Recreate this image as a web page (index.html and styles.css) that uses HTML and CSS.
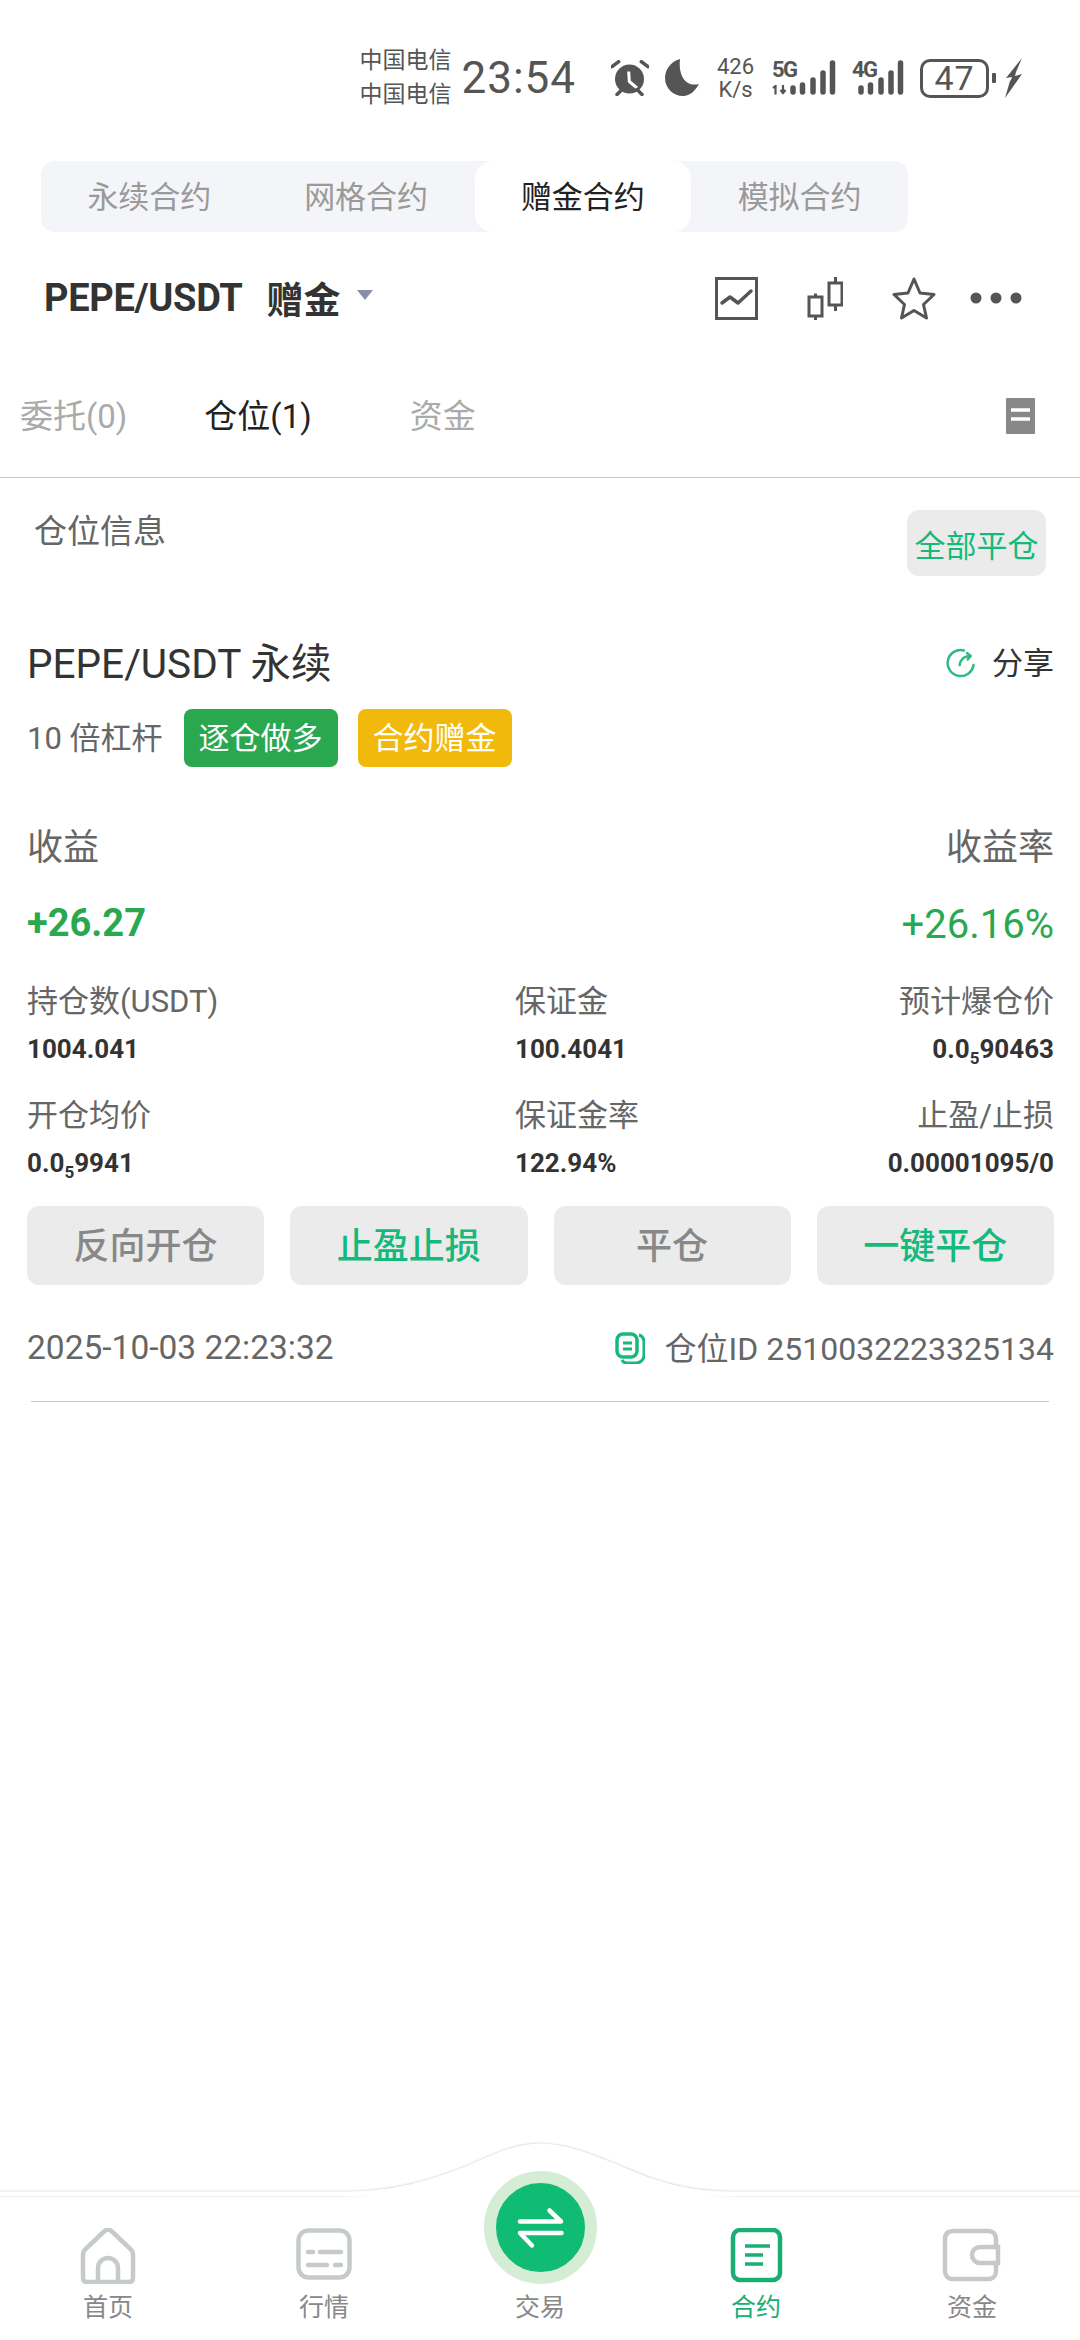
FILE: index.html
```html
<!DOCTYPE html>
<html lang="zh">
<head>
<meta charset="utf-8">
<title>合约</title>
<link rel="stylesheet" href="styles.css">
</head>
<body>
<div class="page">
  <header class="status">
    <div class="carriers"><span>中国电信</span><span>中国电信</span></div>
    <div class="clock">23:54</div>
    <svg class="st-alarm" viewBox="0 0 38 36" width="38" height="36"><circle cx="18.500" cy="19" r="14.500" fill="#555"/><path d="M17.700 11.500 18.300 21.500 26 28" fill="none" stroke="#fff" stroke-width="3"/><path d="M1 6.700 7.700 1.700M37 6.700 30.300 1.700M6 34.500l5-5M31 34.500l-5-5" stroke="#555" stroke-width="3.500" stroke-linecap="round" fill="none"/></svg>
    <svg class="st-moon" viewBox="0 0 36 38" width="36" height="38"><path d="M16 0C6 3 1 11 1 19c0 10 8 18 18 18 7 0 12-5 16-12-11 3-21-5-19-25Z" fill="#555"/></svg>
    <div class="speed"><span>426</span><span>K/s</span></div>
    <div class="net net-5g">
      <span class="net-label">5G</span>
      <svg class="net-sub" viewBox="0 0 18 10" width="18" height="10"><path d="M1 3 3.500 1V9.500M11 0V7M8.500 5 11 8l2.500-3" fill="none" stroke="#555" stroke-width="2.200"/></svg>
      <svg class="bars" viewBox="0 0 46 36" width="46" height="36"><path d="M3 29v4M12.500 26v7M23 21v12M33 14v19M42.500 4v29" stroke="#555" stroke-width="5.500" stroke-linecap="round"/></svg>
    </div>
    <div class="net net-4g">
      <span class="net-label">4G</span>
      <svg class="bars" viewBox="0 0 46 36" width="46" height="36"><path d="M3 29v4M12.500 26v7M23 21v12M33 14v19M42.500 4v29" stroke="#555" stroke-width="5.500" stroke-linecap="round"/></svg>
    </div>
    <div class="battery"><span>47</span></div>
    <span class="nub"></span>
    <svg class="bolt" viewBox="0 0 18 40" width="18" height="40"><path d="M17 0 1 20l6-1-1 3-1 1-5 17 17-24-7 2 1-4Z" fill="#555"/></svg>
  </header>

  <nav class="segment">
    <div class="seg-item">永续合约</div>
    <div class="seg-item">网格合约</div>
    <div class="seg-item seg-active">赠金合约</div>
    <div class="seg-item">模拟合约</div>
  </nav>

  <section class="pair-row">
    <div class="pair-name">PEPE/USDT</div>
    <div class="pair-tag">赠金</div>
    <span class="caret"></span>
    <div class="pair-actions">
      <svg viewBox="0 0 43 43" width="43" height="43"><rect x="1.500" y="1.500" width="40" height="40" fill="none" stroke="#555" stroke-width="3"/><path d="M7 26l8-6 8 6 13-12" fill="none" stroke="#555" stroke-width="3.500" stroke-linecap="round" stroke-linejoin="round"/></svg>
      <svg viewBox="0 0 36 43" width="36" height="43"><rect x="2" y="20" width="13" height="19" fill="none" stroke="#555" stroke-width="3"/><rect x="22" y="6" width="13" height="22" fill="none" stroke="#555" stroke-width="3"/><path d="M8.500 16.500v3M8.500 39v4M28.500 0v6M28.500 28v6" stroke="#555" stroke-width="3"/></svg>
      <svg viewBox="0 0 44 43" width="44" height="43"><path d="M22 2l6 14 14 1.500-10.500 10L34.500 41 22 33.500 9.500 41l3-13.500L2 17.500 16 16Z" fill="none" stroke="#555" stroke-width="3" stroke-linejoin="round"/></svg>
      <svg viewBox="0 0 52 12" width="52" height="12"><circle cx="6" cy="6" r="5.500" fill="#555"/><circle cx="26" cy="6" r="5.500" fill="#555"/><circle cx="46" cy="6" r="5.500" fill="#555"/></svg>
    </div>
  </section>

  <section class="tabs">
    <div class="tab">委托(0)</div>
    <div class="tab tab-active">仓位(1)</div>
    <div class="tab tab-funds">资金</div>
    <svg class="tab-doc" viewBox="0 0 29 36" width="29" height="36"><rect width="29" height="36" rx="1" fill="#888"/><path d="M5 12h19M5 21h19" stroke="#fff" stroke-width="3.500"/></svg>
  </section>

  <section class="info-head">
    <div class="info-title">仓位信息</div>
    <div class="close-all">全部平仓</div>
  </section>

  <main class="position">
    <div class="pos-title-row">
      <div class="pos-title">PEPE/USDT 永续</div>
      <div class="share">
        <svg viewBox="0 0 30 30" width="30" height="30"><path d="M19 2.500A13 13 0 1 0 28.500 17" fill="none" stroke="#2cbb82" stroke-width="2.500" stroke-linecap="round"/><path d="M14.700 17C15 12 19 8 25 8M22 5l3.700 3-3 3.500" fill="none" stroke="#2cbb82" stroke-width="2.500" stroke-linecap="round" stroke-linejoin="round"/></svg>
        <span>分享</span>
      </div>
    </div>
    <div class="lev-row">
      <span class="lev">10 倍杠杆</span>
      <span class="badge badge-green">逐仓做多</span>
      <span class="badge badge-yellow">合约赠金</span>
    </div>
    <div class="pnl-head"><span>收益</span><span>收益率</span></div>
    <div class="pnl-vals"><span class="pnl-amt">+26.27</span><span class="pnl-rate">+26.16%</span></div>

    <div class="stats">
      <div class="stat"><div class="s-label">持仓数(USDT)</div><div class="s-val">1004.041</div></div>
      <div class="stat"><div class="s-label">保证金</div><div class="s-val">100.4041</div></div>
      <div class="stat stat-r"><div class="s-label">预计爆仓价</div><div class="s-val">0.0<sub>5</sub>90463</div></div>
      <div class="stat stat-row2"><div class="s-label">开仓均价</div><div class="s-val">0.0<sub>5</sub>9941</div></div>
      <div class="stat stat-row2"><div class="s-label">保证金率</div><div class="s-val">122.94%</div></div>
      <div class="stat stat-r stat-row2"><div class="s-label">止盈/止损</div><div class="s-val">0.00001095/0</div></div>
    </div>

    <div class="actions">
      <div class="act">反向开仓</div>
      <div class="act act-green">止盈止损</div>
      <div class="act">平仓</div>
      <div class="act act-green">一键平仓</div>
    </div>

    <div class="meta">
      <span class="meta-date">2025-10-03 22:23:32</span>
      <div class="meta-id">
        <svg viewBox="0 0 30 32" width="30" height="32"><rect x="2" y="2" width="20" height="23" rx="6" fill="none" stroke="#14b97b" stroke-width="3.500"/><path d="M24 3c3 1 5 4 5 7v13c0 5-4 8-8 8h-9c-2 0-4-1-5-3" fill="none" stroke="#14b97b" stroke-width="3"/><path d="M8 11h9M8 17h9" stroke="#14b97b" stroke-width="3"/></svg>
        <span>仓位ID 2510032223325134</span>
      </div>
    </div>
    <div class="pos-divider"></div>
  </main>

  <footer class="tabbar">
    <svg class="curve" viewBox="0 0 1080 58" width="1080" height="58"><path class="curve-shadow" d="M0 53.500H345C400 53.500 440 38.500 470 26.500C495 15.500 515 5.500 540 5.500C565 5.500 590 15.500 615 25.500C650 40.500 680 53.500 735 53.500H1080" fill="none" stroke="#c4c4c4" stroke-width="4"/><path d="M0 56V51.500H345C400 51.500 440 36.500 470 24.500C495 13.500 515 3.500 540 3.500C565 3.500 590 13.500 615 23.500C650 38.500 680 51.500 735 51.500H1080V56Z" fill="#fff"/></svg>
    <div class="trade-btn">
      <svg viewBox="0 0 90 90" width="90" height="90"><path d="M24 38.500H65L53.500 27.500M65.500 50H24L36 62.500" fill="none" stroke="#fff" stroke-width="4.500" stroke-linecap="round" stroke-linejoin="round"/></svg>
    </div>
    <div class="nav-item">
      <svg viewBox="0 0 56 56" width="56" height="56"><path d="M3 26c0-2 .6-3 2-4.500L24 3.500c2.500-2.200 5.500-2.200 8 0l19 18c1.400 1.500 2 2.500 2 4.500v24c0 2.500-1.500 4-4 4H7c-2.500 0-4-1.500-4-4Z" fill="none" stroke="#c5ccc7" stroke-width="4.500"/><path d="M18 53V40a10 10 0 0 1 20 0v13" fill="none" stroke="#c5ccc7" stroke-width="4.500"/></svg>
      <span>首页</span>
    </div>
    <div class="nav-item">
      <svg viewBox="0 0 56 56" width="56" height="56"><rect x="2.500" y="2.500" width="51" height="47" rx="10" fill="none" stroke="#c5ccc7" stroke-width="4.500"/><path d="M12 24h5M24 24h21M12 37h19M39 37h6" stroke="#c5ccc7" stroke-width="4.500" stroke-linecap="round"/></svg>
      <span>行情</span>
    </div>
    <div class="nav-item">
      <span class="nav-spacer"></span>
      <span>交易</span>
    </div>
    <div class="nav-item nav-active">
      <svg viewBox="0 0 56 56" width="56" height="56"><rect x="5" y="2" width="47" height="50" rx="7" fill="none" stroke="#1aae74" stroke-width="4.500"/><path d="M17 18h25M17 27h18M17 36h18" stroke="#1aae74" stroke-width="3.500"/></svg>
      <span>合约</span>
    </div>
    <div class="nav-item">
      <svg viewBox="0 0 60 56" width="60" height="56"><path d="M54 18V11c0-5-3-8-8-8H12C6 3 3 6 3 11v32c0 5 3 8 8 8h35c5 0 8-3 8-8v-8" fill="none" stroke="#c8c8c8" stroke-width="4.500"/><path d="M56 19H38a8 8 0 0 0 0 16h18Z" fill="none" stroke="#c8c8c8" stroke-width="4.500"/></svg>
      <span>资金</span>
    </div>
  </footer>
</div>
</body>
</html>
```

FILE: styles.css
```css
* { box-sizing: border-box; }
html, body { margin: 0; padding: 0; background: #fff; }
body { font-family: Roboto, "Noto Sans CJK SC", sans-serif; color: #333; }
.page { width: 1080px; height: 2340px; display: flex; flex-direction: column; overflow: hidden; }

/* Status bar */
.status { height: 130px; padding: 26px 57px 0 0; display: flex; align-items: center; justify-content: flex-end; color: #555; }
.carriers { display: flex; flex-direction: column; font-size: 23px; line-height: 34px; margin-right: 10px; }
.clock { font-size: 44px; margin-right: 35px; letter-spacing: 1px; }
.st-alarm { margin-right: 15px; }
.st-moon { margin-right: 16px; }
.speed { display: flex; flex-direction: column; align-items: center; font-size: 22px; line-height: 23px; margin-right: 16px; width: 39px; }
.net { position: relative; width: 65px; height: 40px; display: flex; justify-content: flex-end; align-items: flex-end; }
.net-5g { margin-right: 15px; }
.net-4g { width: 53px; margin-right: 16px; }
.net .bars { margin-bottom: 3px; }
.net-label { position: absolute; left: 1px; top: 1px; font-size: 22px; line-height: 22px; font-weight: 700; letter-spacing: -1.500px; }
.net-sub { position: absolute; left: 1px; bottom: 3px; }
.battery { width: 69px; height: 39px; border: 3px solid #555; border-radius: 10px; display: flex; align-items: center; justify-content: center; font-size: 34px; line-height: 1; letter-spacing: 1px; }
.nub { width: 4px; height: 10px; background: #555; margin: 0 9px 0 3px; border-radius: 1px; }

/* Segmented control */
.segment { width: 867px; height: 71px; margin: 31px 0 0 41px; background: #f4f5f9; border-radius: 14px; display: flex; }
.seg-item { width: 217px; padding-bottom: 5px; display: flex; align-items: center; justify-content: center; font-size: 31px; color: #9a9a9a; }
.seg-active { background: #fff; color: #222; border-radius: 18px; }

/* Pair row */
.pair-row { height: 60px; margin-top: 36px; padding: 0 58px 0 44px; display: flex; align-items: center; }
.pair-name { font-size: 38px; font-weight: 700; color: #333; letter-spacing: -.3px; }
.pair-tag { font-size: 37px; font-weight: 700; color: #333; margin-left: 24px; }
.caret { width: 0; height: 0; margin: -6px 0 0 16px; border-left: 8.500px solid transparent; border-right: 8.500px solid transparent; border-top: 10px solid #8a8fa5; }
.pair-actions { margin-left: auto; display: flex; align-items: center; gap: 49px; }
.pair-actions svg:last-child { margin-left: -15px; }

/* Tabs */
.tabs { height: 123px; margin-top: 27px; padding: 0 45px 0 20px; border-bottom: 1px solid #c8c8c8; display: flex; align-items: center; }
.tab { font-size: 33px; padding-bottom: 5px; color: #aaa; margin-right: 77px; }
.tab-active { color: #222; margin-right: 98px; }
.tab-funds { margin-right: 0; }
.tab-doc { margin-left: auto; }

/* Info header */
.info-head { margin-top: 32px; padding: 0 34px; display: flex; justify-content: space-between; align-items: flex-start; }
.info-title { font-size: 33px; line-height: 44px; color: #666; }
.close-all { width: 139px; height: 66px; background: #ebebeb; border-radius: 12px; display: flex; align-items: center; justify-content: center; font-size: 31px; color: #14b97b; }

/* Position */
.position { padding: 0 26px 0 27px; }
.pos-title-row { height: 60px; margin-top: 57px; display: flex; justify-content: space-between; align-items: center; }
.pos-title { font-size: 40.500px; padding-bottom: 6px; color: #333; }
.share { display: flex; align-items: center; gap: 17px; font-size: 31px; color: #333; }
.share span { padding-bottom: 5px; }
.lev-row { height: 58px; margin-top: 16px; display: flex; align-items: center; }
.lev { font-size: 31px; padding-bottom: 5px; color: #666; margin-right: 21px; }
.badge { width: 154px; height: 58px; padding-bottom: 5px; border-radius: 8px; display: flex; align-items: center; justify-content: center; color: #fff; font-size: 31px; margin-right: 20px; }
.badge-green { background: #2aa84f; }
.badge-yellow { background: #f2b90d; }
.pnl-head { height: 50px; margin-top: 53px; padding-bottom: 3px; display: flex; justify-content: space-between; align-items: center; font-size: 36px; color: #666; }
.pnl-vals { height: 50px; margin-top: 27px; display: flex; justify-content: space-between; align-items: center; color: #2aa84f; }
.pnl-amt { font-size: 38px; font-weight: 700; padding-top: 2px; }
.pnl-rate { font-size: 40px; margin-top: 4px; }
.stats { margin-top: 34px; display: grid; grid-template-columns: 488px 1fr 1fr; }
.stat-r { text-align: right; }
.stat-row2 { margin-top: 28px; }
.s-label { height: 40px; line-height: 42px; font-size: 31px; color: #666; }
.s-val { height: 36px; line-height: 36px; margin-top: 10px; font-size: 26px; font-weight: 700; color: #333; }
.s-val sub { font-size: 17px; line-height: 0; vertical-align: -6px; }
.actions { margin-top: 25px; display: grid; grid-template-columns: repeat(4, 1fr); gap: 26px; }
.act { height: 79px; padding-bottom: 5px; background: #ebebeb; border-radius: 12px; display: flex; align-items: center; justify-content: center; font-size: 36px; font-weight: 500; color: #888; }
.act-green { color: #14b97b; }
.meta { height: 50px; margin-top: 38px; display: flex; justify-content: space-between; align-items: center; font-size: 32px; color: #666; }
.meta-date { font-size: 33.500px; padding-bottom: 2px; }
.meta-id span { padding-bottom: 4px; }
.meta-id { display: flex; align-items: center; gap: 20px; }
.pos-divider { height: 1px; margin: 28px 5px 0 4px; background: #c8c8c8; }

/* Tab bar */
.tabbar { position: relative; margin-top: auto; height: 147px; padding-top: 35px; display: flex; background: #fff; }
.curve { position: absolute; left: 0; top: -53px; overflow: visible; }
.curve-shadow { filter: blur(1px); }
.trade-btn { position: absolute; z-index: 2; left: 484px; top: -22px; width: 113px; height: 113px; border-radius: 50%; background: #10bc74; border: 12px solid #d5edd5; display: flex; align-items: center; justify-content: center; }
.trade-btn svg { flex: none; }
.nav-item { position: relative; width: 216px; display: flex; flex-direction: column; align-items: center; font-size: 25px; line-height: 34px; color: #888; }
.nav-item svg { height: 56px; margin-bottom: 7px; }
.nav-spacer { height: 63px; }
.nav-active { color: #1aae74; }
```
